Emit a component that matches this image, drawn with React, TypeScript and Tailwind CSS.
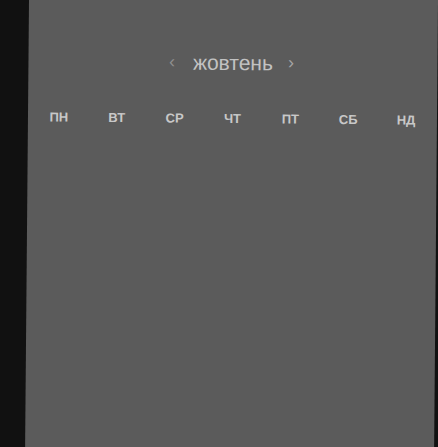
import React from 'react';

const days = ['ПН', 'ВТ', 'СР', 'ЧТ', 'ПТ', 'СБ', 'НД'];

const App: React.FC = () => {
  return (
    <div className="h-[447px] w-[438px] overflow-hidden bg-[#111111]" style={{ fontFamily: '"Liberation Sans", Arial, sans-serif' }}>
      <div className="-mt-[20px] ml-[27px] h-[500px] w-[409px] rotate-[0.5deg] bg-[#5b5b5b]">
        <div className="flex items-center justify-center pt-[67px] pr-[3px]">
          <span className="mr-[18px] text-[18px] text-[#8f8f8f]">‹</span>
          <span className="text-[21px] text-[#c2c2c2]">жовтень</span>
          <span className="ml-[15px] text-[18px] text-[#a5a5a5]">›</span>
        </div>
        <div className="mt-[30px] grid grid-cols-7 px-[2px]">
          {days.map((d) => (
            <div key={d} className="text-center text-[13px] font-bold text-[#c8c8c8]">
              {d}
            </div>
          ))}
        </div>
      </div>
    </div>
  );
};

export default App;
